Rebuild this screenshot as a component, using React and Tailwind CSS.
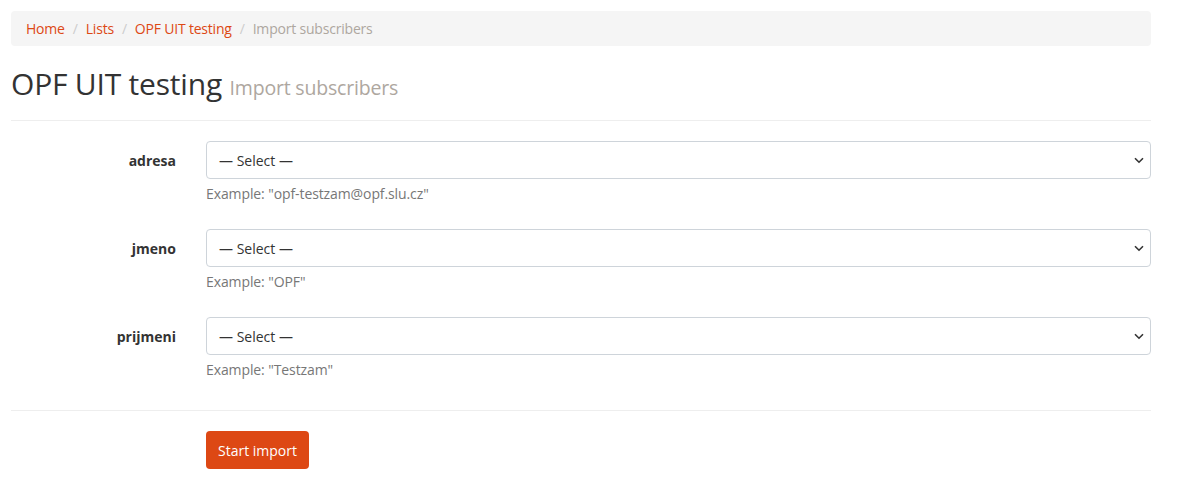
import React from "react";

const fields = [
  { name: "adresa", example: "opf-testzam@opf.slu.cz" },
  { name: "jmeno", example: "OPF" },
  { name: "prijmeni", example: "Testzam" },
];

function Chevron() {
  return (
    <svg width="10" height="7" viewBox="0 0 10 7" className="absolute right-[7px] top-[16px] pointer-events-none">
      <path d="M1 1.2 L5 5.2 L9 1.2" fill="none" stroke="#333" strokeWidth="1.6" />
    </svg>
  );
}

export default function App() {
  return (
    <div className="min-h-screen bg-white text-[#333] font-['Open_Sans',sans-serif] text-[14px]">
      <div className="ml-[11px] w-[1140px] pt-[11px]">
        {/* Breadcrumb */}
        <nav className="h-[35px] bg-[#f5f5f5] rounded-[4px] px-[15px] flex items-center tracking-[-0.2px]">
          <a className="text-[#dd4814]">Home</a>
          <span className="px-[8px] text-[#ccc]">/</span>
          <a className="text-[#dd4814]">Lists</a>
          <span className="px-[8px] text-[#ccc]">/</span>
          <a className="text-[#dd4814]">OPF UIT testing</a>
          <span className="px-[8px] text-[#ccc]">/</span>
          <span className="text-[#aea79f]">Import subscribers</span>
        </nav>

        {/* Page header */}
        <div className="mt-[20px] pb-[14px] border-b border-[#eeeeee]">
          <h1 className="text-[30px] leading-[36px] text-[#333] tracking-[-0.2px]">
            OPF UIT testing{" "}
            <small className="text-[19.5px] text-[#aea79f]">Import subscribers</small>
          </h1>
        </div>

        {/* Form */}
        <form className="mt-[20px]">
          {fields.map((f) => (
            <div key={f.name} className="flex mb-[25px]">
              <label className="w-[165px] h-[38px] flex items-center justify-end font-bold">
                {f.name}
              </label>
              <div className="ml-[30px] flex-1">
                <div className="relative">
                  <div className="h-[38px] border border-[#ced4da] rounded-[4px] pl-[12px] flex items-center bg-white">
                    — Select —
                  </div>
                  <Chevron />
                </div>
                <p className="mt-[4px] leading-[21px] text-[#777] tracking-[-0.1px]">Example: "{f.example}"</p>
              </div>
            </div>
          ))}

          <div className="border-t border-[#eeeeee] mt-[30px] pt-[20px]">
            <div className="ml-[195px]">
              <button
                type="button"
                className="h-[38px] px-[12px] rounded-[4px] bg-[#dd4814] text-white"
              >
                Start import
              </button>
            </div>
          </div>
        </form>
      </div>
    </div>
  );
}
